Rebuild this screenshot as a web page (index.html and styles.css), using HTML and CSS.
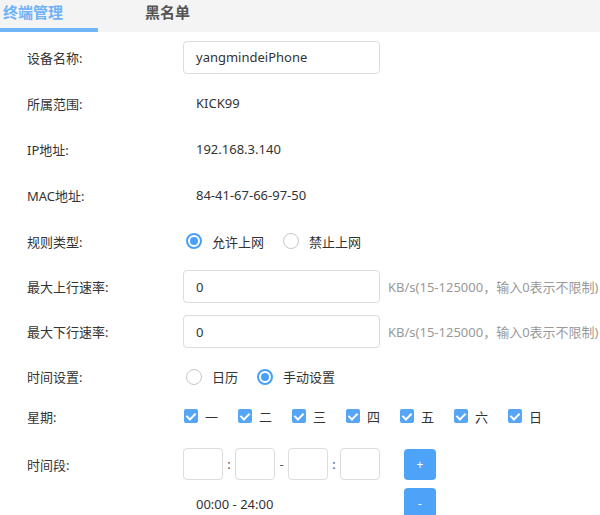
FILE: index.html
```html
<!DOCTYPE html>
<html lang="zh-CN">
<head>
<meta charset="utf-8">
<title>终端管理</title>
<link rel="stylesheet" href="styles.css">
</head>
<body>
<div class="tabs">
  <div class="tab active">终端管理</div>
  <div class="tab">黑名单</div>
</div>
<div class="form">
  <div class="row r46">
    <div class="label">设备名称:</div>
    <div class="input wide"><span>yangmindeiPhone</span></div>
  </div>
  <div class="row r46">
    <div class="label">所属范围:</div>
    <div class="value">KICK99</div>
  </div>
  <div class="row r46">
    <div class="label">IP地址:</div>
    <div class="value">192.168.3.140</div>
  </div>
  <div class="row r46">
    <div class="label">MAC地址:</div>
    <div class="value">84-41-67-66-97-50</div>
  </div>
  <div class="row r46">
    <div class="label">规则类型:</div>
    <div class="radios">
      <label class="radio"><span class="dot on"></span>允许上网</label>
      <label class="radio"><span class="dot"></span>禁止上网</label>
    </div>
  </div>
  <div class="row r45">
    <div class="label">最大上行速率:</div>
    <div class="input wide"><span>0</span></div>
    <div class="hint">KB/s(15-125000，输入0表示不限制)</div>
  </div>
  <div class="row r45">
    <div class="label">最大下行速率:</div>
    <div class="input wide"><span>0</span></div>
    <div class="hint">KB/s(15-125000，输入0表示不限制)</div>
  </div>
  <div class="row r45">
    <div class="label">时间设置:</div>
    <div class="radios">
      <label class="radio"><span class="dot"></span>日历</label>
      <label class="radio"><span class="dot on"></span>手动设置</label>
    </div>
  </div>
  <div class="row r34">
    <div class="label">星期:</div>
    <div class="checks">
      <label class="check"><span class="box"></span>一</label>
      <label class="check"><span class="box"></span>二</label>
      <label class="check"><span class="box"></span>三</label>
      <label class="check"><span class="box"></span>四</label>
      <label class="check"><span class="box"></span>五</label>
      <label class="check"><span class="box"></span>六</label>
      <label class="check"><span class="box"></span>日</label>
    </div>
  </div>
  <div class="row r55">
    <div class="label">时间段:</div>
    <div class="times">
      <div class="input small"></div><span class="sep">:</span>
      <div class="input small"></div><span class="sep dash">-</span>
      <div class="input small"></div><span class="sep">:</span>
      <div class="input small"></div>
    </div>
    <div class="btn">+</div>
  </div>
  <div class="row r40 last">
    <div class="label"></div>
    <div class="value range">00:00 - 24:00</div>
    <div class="btn">-</div>
  </div>
</div>
</body>
</html>
```

FILE: styles.css
```css
html, body {
  margin: 0;
  padding: 0;
  background: #fff;
  overflow: hidden;
}
body {
  font-family: "Noto Sans", "Noto Sans CJK SC", sans-serif;
  font-size: 13px;
  color: #333;
  width: 600px;
  height: 515px;
}
.tabs {
  display: flex;
  height: 32px;
  background: #f4f4f4;
}
.tab {
  box-sizing: border-box;
  height: 32px;
  font-size: 15px;
  font-weight: bold;
  color: #555;
  line-height: 24px;
  padding-left: 47px;
}
.tab.active {
  width: 98px;
  padding-left: 3px;
  color: #6fb3f7;
  border-bottom: 4px solid #70b5f7;
}
.form {
  padding-top: 2px;
}
.row {
  display: flex;
  align-items: center;
}
.r46 { height: 46px; }
.r45 { height: 45px; }
.r34 { height: 34px; }
.r55 { height: 55px; padding-top: 7px; box-sizing: border-box; }
.r40 { height: 40px; align-items: flex-start; }
.label {
  width: 183px;
  padding-left: 27px;
  box-sizing: border-box;
  flex: none;
}
.value {
  padding-left: 13px;
}
.input {
  box-sizing: border-box;
  height: 33px;
  border: 1px solid #dcdcdc;
  border-radius: 4px;
  display: flex;
  align-items: center;
  background: #fff;
}
.input.wide {
  width: 197px;
  padding-left: 12px;
}
.input.small {
  width: 40px;
  height: 32px;
}
.hint {
  color: #999;
  margin-left: 8px;
  white-space: nowrap;
}
.radios {
  display: flex;
  padding-left: 3px;
}
.radio {
  display: flex;
  align-items: center;
  margin-right: 19px;
}
.dot {
  box-sizing: border-box;
  width: 16px;
  height: 16px;
  border-radius: 50%;
  border: 1px solid #c8c8c8;
  margin-right: 10px;
  position: relative;
}
.dot.on {
  border: 2px solid #4a9ff9;
}
.dot.on::after {
  content: "";
  position: absolute;
  left: 2px;
  top: 2px;
  width: 8px;
  height: 8px;
  border-radius: 50%;
  background: #4a9ff9;
}
.checks {
  display: flex;
  padding-left: 1px;
}
.check {
  display: flex;
  align-items: center;
  width: 54px;
}
.box {
  width: 14px;
  height: 14px;
  border-radius: 2px;
  background: #56a6f5;
  margin-right: 7px;
  position: relative;
}
.box::after {
  content: "";
  position: absolute;
  left: 4px;
  top: 2px;
  width: 4px;
  height: 7px;
  border: solid #fff;
  border-width: 0 2px 2px 0;
  transform: rotate(45deg);
}
.times {
  display: flex;
  align-items: center;
}
.sep {
  width: 12px;
  text-align: center;
  color: #555;
}
.sep.dash {
  width: 13px;
}
.btn {
  width: 32px;
  height: 31px;
  border-radius: 4px;
  background: #4da3f7;
  color: #fff;
  font-size: 12px;
  display: flex;
  align-items: center;
  justify-content: center;
  margin-left: 24px;
}
.range {
  padding-top: 7px;
  width: 208px;
  box-sizing: border-box;
}
.last .btn {
  margin-left: 13px;
}
```
